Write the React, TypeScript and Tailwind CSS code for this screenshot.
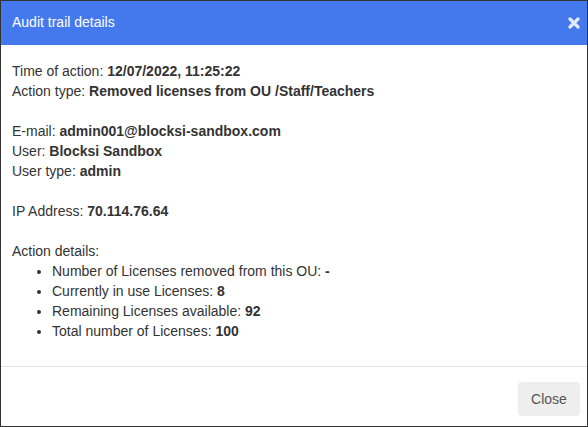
export default function App() {
  return (
    <div className="w-[588px] h-[427px] border border-[#333] bg-white flex flex-col font-['Liberation_Sans',Arial,sans-serif] text-[14px] leading-[20px] text-[#333]">
      {/* Header */}
      <div className="h-[44px] bg-[#4479ee] flex items-center justify-between pl-[11px] pr-[6px] shrink-0">
        <h2 className="text-white text-[14px] font-normal -mt-[2px]">Audit trail details</h2>
        <button className="w-[12px] h-[12px] flex items-center justify-center mr-[1px]">
          <svg viewBox="0 0 12 12" className="w-[12px] h-[12px]">
            <path d="M2 2L10 10M10 2L2 10" stroke="#e2e9fc" strokeWidth={3.2} strokeLinecap="round" />
          </svg>
        </button>
      </div>

      {/* Body */}
      <div className="flex-1 pt-[16px] pl-[11px] pr-[12px]">
        <p>Time of action: <b>12/07/2022, 11:25:22</b></p>
        <p>Action type: <b>Removed licenses from OU /Staff/Teachers</b></p>
        <div className="h-[20px]" />
        <p>E-mail: <b>admin001@blocksi-sandbox.com</b></p>
        <p>User: <b>Blocksi Sandbox</b></p>
        <p>User type: <b>admin</b></p>
        <div className="h-[20px]" />
        <p>IP Address: <b>70.114.76.64</b></p>
        <div className="h-[20px]" />
        <p>Action details:</p>
        <ul className="list-disc pl-[40px]">
          <li>Number of Licenses removed from this OU: <b>-</b></li>
          <li>Currently in use Licenses: <b>8</b></li>
          <li>Remaining Licenses available: <b>92</b></li>
          <li>Total number of Licenses: <b>100</b></li>
        </ul>
      </div>

      {/* Footer */}
      <div className="h-[60px] border-t border-[#e5e5e5] flex items-start justify-end pt-[15px] pr-[6px] shrink-0">
        <button className="h-[34px] w-[62px] rounded-[4px] bg-[#eeeeee] text-[#555] text-[14px] mr-[1px]">Close</button>
      </div>
    </div>
  );
}
